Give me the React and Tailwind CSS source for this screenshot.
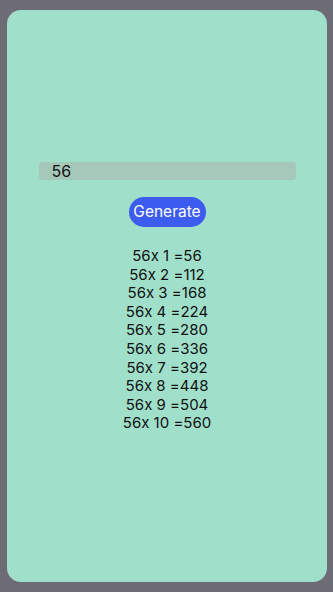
export default function App() {
  const n = 56;
  const rows = Array.from({ length: 10 }, (_, i) => i + 1);

  return (
    <div
      className="h-[592px] w-[333px] bg-[#6d6c74] pt-[10px] pb-[10px] pl-[7px] pr-[6px] [font-feature-settings:'calt'_0]"
      style={{ fontFamily: 'Inter, "Noto Sans", sans-serif' }}
    >
      <div className="flex h-full flex-col items-center rounded-[14px] bg-[#a0e0cb] pt-[152px]">
        <div className="flex h-[18px] w-[257px] items-center rounded-[3px] bg-[#a6c8bb] pl-[13px] text-[16px] text-[#111]">
          {n}
        </div>

        <button className="mt-[17px] h-[30px] w-[77px] rounded-full bg-[#3c5cf0] text-[15.5px] text-white">
          Generate
        </button>

        <div className="mt-[20px] flex flex-col items-center text-[15px] leading-[18.6px] text-[#111]">
          {rows.map((i) => (
            <p key={i}>
              {n}x {i} ={n * i}
            </p>
          ))}
        </div>
      </div>
    </div>
  );
}
